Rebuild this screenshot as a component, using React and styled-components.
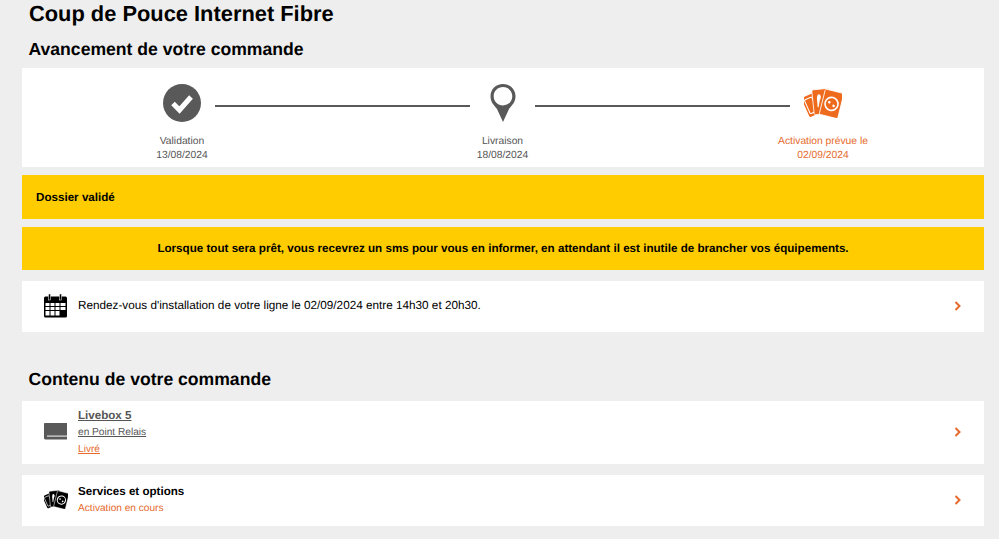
import React from 'react';
import styled, { createGlobalStyle } from 'styled-components';

const orange = '#e56a2c';

const Global = createGlobalStyle`
  html, body { margin: 0; background: #eeeeee; }
  body {
    font-family: "Liberation Sans", Arial, sans-serif;
    color: #000;
    overflow: hidden;
    text-rendering: geometricPrecision;
  }
`;

const Page = styled.div`
  display: flex;
  flex-direction: column;
  height: 539px;
  padding: 0 15px 0 22px;
`;

const PageTitle = styled.h1`
  margin: 0;
  padding-left: 7px;
  font-size: 21.85px;
  line-height: 28px;
  font-weight: 700;
`;

const SectionTitle = styled.h2`
  margin: ${p => p.$top}px 0 0;
  padding-left: 6.5px;
  font-size: 17.6px;
  line-height: 24px;
  font-weight: 700;
`;

const Stepper = styled.div`
  display: flex;
  justify-content: center;
  align-items: flex-start;
  height: 99px;
  margin-top: 7px;
  padding: 16px 1px 0 0;
  box-sizing: border-box;
  background: #fff;
`;

const Step = styled.div`
  display: flex;
  flex-direction: column;
  align-items: center;
  width: 65.5px;
  flex: none;
`;

const StepIcon = styled.div`
  display: flex;
  align-items: center;
  justify-content: center;
  height: 38px;
`;

const StepLabel = styled.div`
  margin-top: 13px;
  font-size: 10.3px;
  line-height: 14px;
  text-align: center;
  white-space: nowrap;
  color: ${p => (p.$active ? orange : '#555')};
`;

const Line = styled.div`
  flex: none;
  width: 255px;
  height: 2px;
  margin-top: 21px;
  background: #595959;
`;

const Banner = styled.div`
  display: flex;
  align-items: center;
  justify-content: ${p => (p.$center ? 'center' : 'flex-start')};
  height: ${p => p.$height}px;
  margin-top: 8px;
  padding-left: ${p => (p.$center ? 0 : 14)}px;
  background: #ffcc00;
  font-size: 11.63px;
  font-weight: 700;
`;

const Row = styled.div`
  display: flex;
  align-items: center;
  height: ${p => p.$height}px;
  margin-top: ${p => p.$top}px;
  padding: 0 22px;
  background: #fff;
`;

const RowIcon = styled.div`
  display: flex;
  align-items: center;
  flex: none;
  width: 34px;
  margin-bottom: 2px;
`;

const RowBody = styled.div`
  flex: 1;
  margin-bottom: ${p => (p.$tall ? 0 : 2)}px;
  font-size: 11.74px;
  line-height: 17px;
`;

const RowTitle = styled.div`
  font-weight: 700;
  font-size: 11.6px;
  color: ${p => (p.$link ? '#555' : '#000')};
  text-decoration: ${p => (p.$link ? 'underline' : 'none')};
`;

const RowNote = styled.div`
  font-size: 10.15px;
  color: ${p => (p.$orange ? orange : '#555')};
  text-decoration: ${p => (p.$link ? 'underline' : 'none')};
`;

const ChevronMark = styled.svg`
  flex: none;
  margin-bottom: 2px;
`;

const Chevron = () => (
  <ChevronMark width="8" height="10" viewBox="0 0 8 10">
    <path d="M1.5 1 L5.5 5 L1.5 9" fill="none" stroke={orange} strokeWidth="2" />
  </ChevronMark>
);

const CheckIcon = () => (
  <svg width="38" height="38" viewBox="0 0 38 38">
    <circle cx="19" cy="19" r="19" fill="#595959" />
    <path d="M10 19.5 L16.5 26 L28 13" fill="none" stroke="#fff" strokeWidth="5" />
  </svg>
);

const PinIcon = () => (
  <svg width="26" height="38" viewBox="0 0 26 38">
    <path
      fillRule="evenodd"
      fill="#595959"
      d="M13 0 C5.8 0 0.5 5.4 0.5 12.2 C0.5 18.5 4.5 21.5 7 25 L13 38 L19 25 C21.5 21.5 25.5 18.5 25.5 12.2 C25.5 5.4 20.2 0 13 0 Z M13 3 C18.2 3 22.3 7 22.3 12.2 C22.3 17.4 18.2 21.4 13 21.4 C7.8 21.4 3.7 17.4 3.7 12.2 C3.7 7 7.8 3 13 3 Z"
    />
  </svg>
);

const CardsIcon = ({ color, width, height }) => (
  <svg width={width} height={height} viewBox="0 0 38 30">
    <g transform="rotate(-24 9 17)">
      <rect x="1" y="6" width="15" height="21" rx="1.5" fill={color} />
      <rect x="3" y="9" width="8" height="15" rx="1" fill="none" stroke="#fff" strokeWidth="1" />
    </g>
    <g transform="rotate(-6 18 14)">
      <rect x="9" y="1" width="17" height="25" rx="1.5" fill={color} stroke="#fff" strokeWidth="0.8" />
      <path d="M15 6 C18 6 18 10 16 12 L14 19 L13 18 C14 14 12 9 15 6 Z" fill="#fff" />
    </g>
    <g transform="rotate(14 28 16)">
      <rect x="18" y="3" width="19" height="26" rx="1.5" fill={color} stroke="#fff" strokeWidth="0.8" />
      <circle cx="27.5" cy="16" r="6.5" fill="none" stroke="#fff" strokeWidth="1.6" />
      <circle cx="25" cy="15" r="1.3" fill="#fff" />
      <circle cx="30" cy="17.5" r="1.3" fill="#fff" />
    </g>
  </svg>
);

const CalendarIcon = () => (
  <svg width="24" height="24" viewBox="0.5 0 24 24">
    <rect x="0.5" y="2.5" width="23" height="21" rx="1.5" fill="#000" />
    <rect x="5" y="0" width="2" height="6" fill="#000" stroke="#fff" strokeWidth="0.5" />
    <rect x="16" y="0" width="2" height="6" fill="#000" stroke="#fff" strokeWidth="0.5" />
    <path
      fill="#fff"
      d="M2 9h4v3H2z M7 9h4v3H7z M12 9h4v3h-4z M17 9h5v3h-5z M2 13h4v3H2z M7 13h4v3H7z M12 13h4v3h-4z M17 13h5v3h-5z M2 17h4v4.5H2z M7 17h4v4.5H7z M12 17h4v4.5h-4z"
    />
  </svg>
);

const BoxIcon = () => (
  <svg width="24" height="18" viewBox="0.5 0 24 18">
    <path d="M0.5 1 C0.5 0.4 1 0 1.5 0 H23.5 V16.5 H1.5 L0.5 15.5 Z" fill="#595959" />
    <rect x="3.5" y="12.5" width="20" height="1.2" fill="#ddd" />
  </svg>
);

export default function App() {
  return (
    <Page>
      <Global />
      <PageTitle>Coup de Pouce Internet Fibre</PageTitle>
      <SectionTitle $top={9}>Avancement de votre commande</SectionTitle>
      <Stepper>
        <Step>
          <StepIcon><CheckIcon /></StepIcon>
          <StepLabel>Validation<br />13/08/2024</StepLabel>
        </Step>
        <Line />
        <Step>
          <StepIcon><PinIcon /></StepIcon>
          <StepLabel>Livraison<br />18/08/2024</StepLabel>
        </Step>
        <Line />
        <Step>
          <StepIcon><CardsIcon color="#ee6a1c" width={38} height={30} /></StepIcon>
          <StepLabel $active>Activation prévue le<br />02/09/2024</StepLabel>
        </Step>
      </Stepper>
      <Banner $height={44}>Dossier validé</Banner>
      <Banner $height={43} $center>
        Lorsque tout sera prêt, vous recevrez un sms pour vous en informer, en attendant il est inutile de brancher vos équipements.
      </Banner>
      <Row $height={51} $top={11}>
        <RowIcon><CalendarIcon /></RowIcon>
        <RowBody>Rendez-vous d'installation de votre ligne le 02/09/2024 entre 14h30 et 20h30.</RowBody>
        <Chevron />
      </Row>
      <SectionTitle $top={35}>Contenu de votre commande</SectionTitle>
      <Row $height={63} $top={10}>
        <RowIcon><BoxIcon /></RowIcon>
        <RowBody $tall>
          <RowTitle $link>Livebox 5</RowTitle>
          <RowNote $link>en Point Relais</RowNote>
          <RowNote $link $orange>Livré</RowNote>
        </RowBody>
        <Chevron />
      </Row>
      <Row $height={51} $top={11}>
        <RowIcon><CardsIcon color="#000" width={24} height={19} /></RowIcon>
        <RowBody>
          <RowTitle>Services et options</RowTitle>
          <RowNote $orange>Activation en cours</RowNote>
        </RowBody>
        <Chevron />
      </Row>
    </Page>
  );
}
